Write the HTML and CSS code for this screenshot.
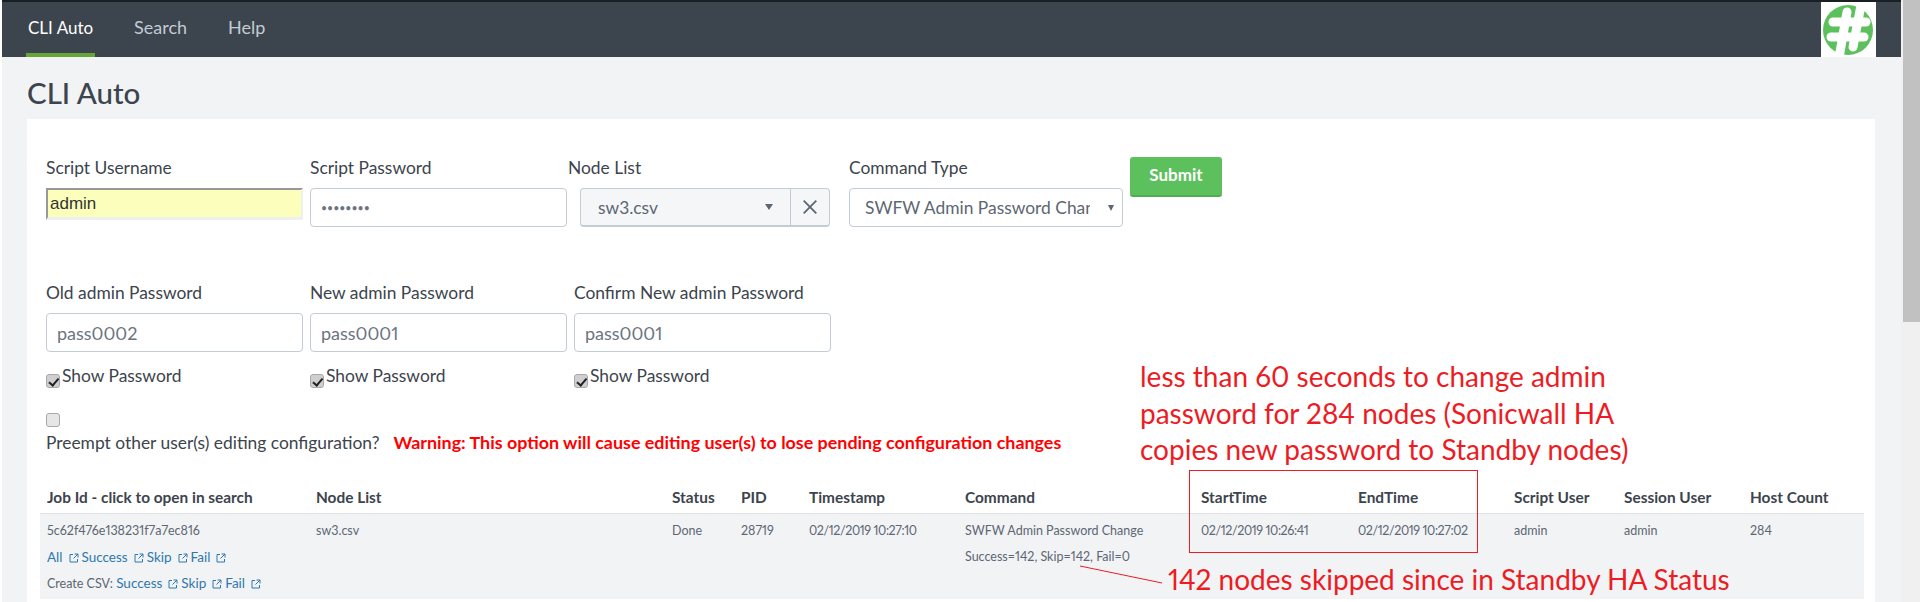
FILE: index.html
```html
<!DOCTYPE html>
<html>
<head>
	<meta charset="utf-8">
	<title>CLI Auto</title>
	<link rel="stylesheet" href="styles.css">
</head>
<body>
<div class="screen">
	<div class="page">
		<div class="nav">
			<div class="nav-links">
				<a class="nav-link active">CLI Auto</a>
				<a class="nav-link">Search</a>
				<a class="nav-link">Help</a>
			</div>
			<div class="logo">
				<svg width="55" height="55" viewBox="0 0 55 55">
					<circle cx="27" cy="28" r="25" fill="#5cc05c"/>
					<g fill="none" stroke="#fff" stroke-width="9" stroke-linecap="round">
						<path d="M26 10L18 56"/>
						<path d="M41 -2L32 45"/>
						<path d="M12 20H45"/>
						<path d="M10 35H43"/>
					</g>
				</svg>
			</div>
		</div>
		<h1 class="title">CLI Auto</h1>
		<div class="panel">
			<div class="form-row row-one">
				<div class="field f-user">
					<label>Script Username</label>
					<input class="input autofill" type="text" value="admin">
				</div>
				<div class="field f-pass">
					<label>Script Password</label>
					<input class="input" type="password" value="pass0001">
				</div>
				<div class="field f-node">
					<label>Node List</label>
					<div class="combo">
						<div class="combo-main"><span>sw3.csv</span><i class="caret"></i></div>
						<div class="combo-clear">
							<svg width="14" height="14" viewBox="0 0 14 14"><path d="M.7 .7L13.300 13.300M13.300 .7L.7 13.300" stroke="#5c6773" stroke-width="1.8" fill="none"/></svg>
						</div>
					</div>
				</div>
				<div class="field f-cmd">
					<label>Command Type</label>
					<div class="select"><span class="select-text">SWFW Admin Password Change</span><i class="caret small"></i></div>
				</div>
				<button class="submit">Submit</button>
			</div>
			<div class="form-row row-two">
				<div class="field f-old">
					<label>Old admin Password</label>
					<input class="input" type="text" value="pass0002">
					<label class="show"><input type="checkbox" checked>Show Password</label>
				</div>
				<div class="field f-new">
					<label>New admin Password</label>
					<input class="input" type="text" value="pass0001">
					<label class="show"><input type="checkbox" checked>Show Password</label>
				</div>
				<div class="field f-confirm">
					<label>Confirm New admin Password</label>
					<input class="input" type="text" value="pass0001">
					<label class="show"><input type="checkbox" checked>Show Password</label>
				</div>
			</div>
			<div class="preempt">
				<input type="checkbox">
				<div class="preempt-text">Preempt other user(s) editing configuration?<b>Warning: This option will cause editing user(s) to lose pending configuration changes</b></div>
			</div>
			<table class="jobs">
				<colgroup>
					<col class="c1"><col class="c2"><col class="c3"><col class="c4"><col class="c5"><col class="c6"><col class="c7"><col class="c8"><col class="c9"><col class="c10"><col class="c11">
				</colgroup>
				<thead>
					<tr>
						<th>Job Id - click to open in search</th>
						<th>Node List</th>
						<th>Status</th>
						<th>PID</th>
						<th>Timestamp</th>
						<th>Command</th>
						<th>StartTime</th>
						<th>EndTime</th>
						<th>Script User</th>
						<th>Session User</th>
						<th>Host Count</th>
					</tr>
				</thead>
				<tbody>
					<tr>
						<td>
							<div class="line">5c62f476e138231f7a7ec816</div>
							<div class="line"><a>All</a><svg class="ext"><use href="#ext"/></svg><a>Success</a><svg class="ext"><use href="#ext"/></svg><a>Skip</a><svg class="ext"><use href="#ext"/></svg><a>Fail</a><svg class="ext"><use href="#ext"/></svg></div>
							<div class="line">Create CSV: <a>Success</a><svg class="ext"><use href="#ext"/></svg><a>Skip</a><svg class="ext"><use href="#ext"/></svg><a>Fail</a><svg class="ext"><use href="#ext"/></svg></div>
						</td>
						<td><div class="line">sw3.csv</div></td>
						<td><div class="line">Done</div></td>
						<td><div class="line">28719</div></td>
						<td><div class="line time">02/12/2019 10:27:10</div></td>
						<td>
							<div class="line">SWFW Admin Password Change</div>
							<div class="line">Success=142, Skip=142, Fail=0</div>
						</td>
						<td><div class="line time">02/12/2019 10:26:41</div></td>
						<td><div class="line time">02/12/2019 10:27:02</div></td>
						<td><div class="line">admin</div></td>
						<td><div class="line">admin</div></td>
						<td><div class="line">284</div></td>
					</tr>
				</tbody>
			</table>
		</div>
	</div>
	<div class="scrollbar"><div class="thumb"></div></div>
</div>

<div class="note note-top">less than 60 seconds to change admin<br>password for 284 nodes (Sonicwall HA<br>copies new password to Standby nodes)</div>
<div class="note note-bottom">142 nodes skipped since in Standby HA Status</div>
<div class="red-box"></div>
<svg class="red-line" width="90" height="24" viewBox="0 0 90 24"><path d="M2 2L84 19" stroke="#ed1c24" stroke-width="1" fill="none"/></svg>

<svg class="defs" width="0" height="0">
	<symbol id="ext" viewBox="0 0 10 10">
		<path d="M4 1.500H1V9H8.500V6M5.500 1H9V4.500M9 1L4.500 5.500" fill="none" stroke="#2f78ad" stroke-width="1"/>
	</symbol>
</svg>
</body>
</html>
```

FILE: styles.css
```css
html,body{
	margin: 0;
	padding: 0;
	height: 602px;
	overflow: hidden;
	background: #fff;
}
body{
	font-family: "Lato", "Liberation Sans", sans-serif;
	font-variant-numeric: proportional-nums;
	color: #3c444d;
	position: relative;
}
.screen{
	display: flex;
	height: 602px;
	padding-left: 2px;
}
.page{
	width: 1899px;
	background: #f2f3f5;
	flex: none;
}
.scrollbar{
	flex: 1;
	padding-left: 2px;
	background: #f0f0f0;
}
.thumb{
	height: 322px;
	background: #c1c1c1;
}

/* nav */
.nav{
	height: 55px;
	border-top: 2px solid #1a1f24;
	background: #3c444d;
	display: flex;
	justify-content: space-between;
}
.nav-links{
	display: flex;
	padding-left: 24px;
	gap: 37px;
}
.nav-link{
	height: 51px;
	line-height: 51px;
	font-size: 18px;
	padding: 0 2px;
	color: #c3cbd4;
	border-bottom: 4px solid transparent;
}
.nav-link.active{
	font-size: 17px;
	color: #fff;
	border-bottom-color: #65a637;
}
.logo{
	width: 55px;
	height: 55px;
	background: #fff;
	margin-right: 25px;
	overflow: hidden;
}
.title{
	margin: 0;
	height: 62px;
	line-height: 72px;
	padding-left: 25px;
	font-size: 29.5px;
	font-weight: 500;
	color: #3c444d;
}

/* form */
.panel{
	margin-left: 25px;
	width: 1848px;
	height: 483px;
	background: #fff;
	padding-top: 39px;
	box-sizing: border-box;
	overflow: hidden;
}
.form-row{
	display: flex;
	padding-left: 19px;
}
.field label{
	display: block;
	font-size: 17.4px;
	line-height: 20px;
	height: 20px;
	margin-bottom: 10px;
}
.input{
	display: block;
	width: 100%;
	height: 39px;
	box-sizing: border-box;
	border: 1px solid #c3cbd4;
	border-radius: 4px;
	padding: 0 10px;
	font-family: inherit;
	font-variant-numeric: inherit;
	font-size: 18px;
	color: #6b7480;
	background: #fff;
	outline: none;
}
.input.autofill{
	height: 32px;
	padding: 0 2px;
	border: 0;
	border-top: 2px solid #989898;
	border-left: 2px solid #989898;
	border-bottom: 3px solid #eef0f2;
	border-right: 2px solid #eef0f2;
	border-radius: 0;
	background: #fbffbb;
	font-family: "Liberation Sans", sans-serif;
	font-size: 17px;
	color: #333;
}
input[type=password]{
	font-size: 10.500px;
	letter-spacing: 0;
}
.f-user{width: 257px;margin-right: 7px;}
.f-pass{width: 257px;margin-right: 1px;}
.f-node{width: 281px;}
.f-cmd{width: 274px;margin-left: 0;}
.f-old{width: 257px;margin-right: 7px;}
.f-new{width: 257px;margin-right: 7px;}
.f-confirm{width: 257px;}
.combo{
	display: flex;
	margin-left: 12px;
	width: 250px;
	height: 39px;
	box-sizing: border-box;
	background: #f5f6f8;
	border: 1px solid #c3cbd4;
	border-bottom-width: 2px;
	border-radius: 4px;
	font-size: 17.4px;
	color: #5c6773;
}
.combo-main{
	width: 210px;
	box-sizing: border-box;
	padding: 0 17px 0 17px;
	display: flex;
	align-items: center;
	justify-content: space-between;
	border-right: 1px solid #c3cbd4;
}
.combo-clear{
	flex: 1;
	display: flex;
	align-items: center;
	justify-content: center;
}
.caret{
	width: 0;
	height: 0;
	border-left: 4.500px solid transparent;
	border-right: 4.500px solid transparent;
	border-top: 6px solid #5c6773;
}
.caret.small{
	border-left-width: 3px;
	border-right-width: 3px;
	border-top-width: 6px;
	flex: none;
	margin-left: 18px;
}
.select{
	height: 39px;
	box-sizing: border-box;
	border: 1px solid #c3cbd4;
	border-radius: 4px;
	display: flex;
	align-items: center;
	padding: 0 8px 0 15px;
	font-size: 17.4px;
	color: #5c6773;
}
.select-text{
	flex: 1;
	overflow: hidden;
	white-space: nowrap;
}
.submit{
	margin: -1px 0 0 7px;
	width: 92px;
	height: 40px;
	padding-bottom: 4px;
	background: #5cc05c;
	border: 0;
	border-bottom: 2px solid #52ad52;
	border-radius: 3px;
	color: #fff;
	font-family: inherit;
	font-size: 17px;
	font-weight: 700;
}
.row-two{
	margin-top: 56px;
}
.field label.show{
	display: flex;
	align-items: flex-start;
	margin: 14px 0 0;
	height: 20px;
	line-height: 20px;
}
input[type=checkbox]{
	appearance: none;
	box-sizing: border-box;
	flex: none;
	position: relative;
	width: 14px;
	height: 14px;
	background: #e6e6e6;
	border: 1px solid #a8a8a8;
	border-radius: 3px;
}
input[type=checkbox]:checked{
	background: #cfcfcf;
}
input[type=checkbox]:checked::after{
	content: "";
	position: absolute;
	left: 3.500px;
	top: 0.500px;
	width: 3.500px;
	height: 7.500px;
	border: solid #222;
	border-width: 0 2px 2px 0;
	transform: rotate(40deg);
}
.show input{
	margin: 8px 2px 0 0;
}
.preempt{
	padding-left: 19px;
	margin-top: 27px;
}
.preempt input{
	display: block;
	margin: 0;
}
.preempt-text{
	margin-top: 5px;
	font-size: 17.4px;
	line-height: 20px;
	height: 20px;
}
.preempt-text b{
	color: #f00;
	margin-left: 14px;
	font-size: 17.900px;
	font-weight: 700;
}

/* table */
.jobs{
	margin: 28px 0 0 13px;
	width: 1824px;
	border-collapse: collapse;
	table-layout: fixed;
}
.c1{width: 269px;}
.c2{width: 356px;}
.c3{width: 69px;}
.c4{width: 68px;}
.c5{width: 156px;}
.c6{width: 236px;}
.c7{width: 157px;}
.c8{width: 156px;}
.c9{width: 110px;}
.c10{width: 126px;}
.c11{width: 121px;}
.jobs th{
	text-align: left;
	font-size: 15.400px;
	font-weight: 700;
	height: 33px;
	padding: 0 0 0 7px;
	border-bottom: 1px solid #dfe3e8;
	white-space: nowrap;
}
.jobs td{
	background: #f2f3f5;
	vertical-align: top;
	padding: 4px 0 3px 7px;
	font-size: 12.500px;
	color: #5c6773;
	height: 77px;
	box-sizing: content-box;
	white-space: nowrap;
}
.line{
	height: 26px;
	line-height: 26px;
}
.line.time{
	letter-spacing: -0.4px;
}
.line a{
	font-size: 13.500px;
	color: #2f78ad;
}
.ext{
	width: 10px;
	height: 10px;
	margin: 0 3px 0 6px;
	vertical-align: -1px;
}
.defs{
	position: absolute;
}

/* annotations drawn on top of the screenshot */
.note{
	position: absolute;
	font-family: "Lato", "Liberation Sans", sans-serif;
	font-size: 28px;
	line-height: 36.500px;
	color: #ed1c24;
	white-space: nowrap;
}
.note-top{
	left: 1140px;
	top: 358px;
}
.note-bottom{
	left: 1168px;
	top: 561px;
}
.red-box{
	position: absolute;
	left: 1189px;
	top: 470px;
	width: 287px;
	height: 81px;
	border: 1px solid #ed1c24;
}
.red-line{
	position: absolute;
	left: 1078px;
	top: 564px;
}
```
